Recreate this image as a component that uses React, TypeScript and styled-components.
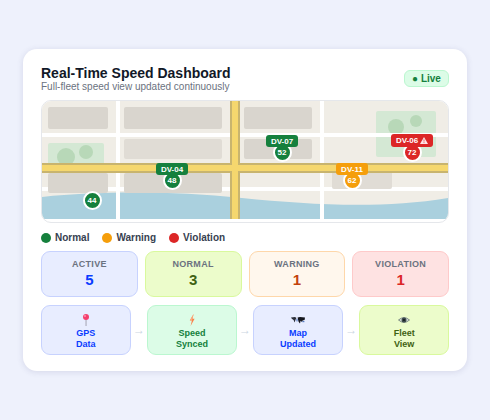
import React from 'react';
import styled, { createGlobalStyle } from 'styled-components';

const GlobalStyle = createGlobalStyle`
  html, body {
    margin: 0;
    padding: 0;
    height: 100%;
    background: #eef1fc;
    font-family: "Liberation Sans", Arial, sans-serif;
  }
  #root { height: 100%; }
`;

const Page = styled.div`
  height: 420px;
  display: flex;
  align-items: center;
  justify-content: center;
`;

const Card = styled.div`
  width: 444px;
  box-sizing: border-box;
  padding: 16px 18px 16px;
  background: #fff;
  border-radius: 14px;
  box-shadow: 0 1px 6px rgba(60, 60, 110, 0.14);
`;

const Header = styled.div`
  display: flex;
  justify-content: space-between;
  align-items: flex-start;
  margin-bottom: 7px;
`;

const Title = styled.h1`
  margin: 0;
  font-size: 14px;
  line-height: 16px;
  font-weight: 700;
  color: #111827;
`;

const Subtitle = styled.p`
  margin: 0;
  font-size: 10px;
  line-height: 12px;
  color: #6b7280;
`;

const LiveBadge = styled.span`
  margin-top: 5px;
  box-sizing: border-box;
  height: 17px;
  width: 45px;
  display: flex;
  align-items: center;
  justify-content: center;
  background: #dcfce7;
  border: 1px solid #bbf7d0;
  border-radius: 6px;
  font-size: 10px;
  font-weight: 700;
  color: #15803d;
`;

const MapFrame = styled.div`
  position: relative;
  height: 123px;
  box-sizing: border-box;
  border: 1px solid #e5e7eb;
  border-radius: 10px;
  overflow: hidden;
  background: #fff;
`;

const MapArt = styled.svg`
  display: block;
  width: 406px;
  height: 118px;
`;

const tones = {
  normal: '#15803d',
  warning: '#f59e0b',
  violation: '#dc2626',
};

type Tone = keyof typeof tones;

const Marker = styled.div<{ $x: number; $y: number }>`
  position: absolute;
  left: ${p => p.$x}px;
  top: ${p => p.$y}px;
  width: 0;
  display: flex;
  flex-direction: column;
  align-items: center;
`;

const MarkerTag = styled.span<{ $tone: Tone; $alert: boolean }>`
  position: relative;
  z-index: 1;
  flex: none;
  height: ${p => (p.$alert ? '13px' : '12px')};
  padding: 0 5px;
  display: flex;
  align-items: center;
  gap: 2px;
  background: ${p => tones[p.$tone]};
  border-radius: 3px;
  color: #fff;
  font-size: 8px;
  font-weight: 700;
  white-space: nowrap;
`;

const MarkerDot = styled.span<{ $tone: Tone; $tagged: boolean }>`
  flex: none;
  width: 19px;
  height: 19px;
  box-sizing: border-box;
  margin-top: ${p => (p.$tagged ? '-4px' : '0')};
  display: flex;
  align-items: center;
  justify-content: center;
  background: ${p => tones[p.$tone]};
  border: 2px solid #fff;
  border-radius: 50%;
  color: #fff;
  font-size: 8px;
  font-weight: 700;
`;

const Legend = styled.div`
  display: flex;
  gap: 13px;
  margin: 9px 0 8px;
  height: 11px;
`;

const LegendItem = styled.span`
  display: flex;
  align-items: center;
  gap: 4px;
  font-size: 10px;
  font-weight: 700;
  color: #374151;
`;

const LegendDot = styled.i<{ $tone: Tone }>`
  width: 10px;
  height: 10px;
  border-radius: 50%;
  background: ${p => tones[p.$tone]};
`;

const Stats = styled.div`
  display: grid;
  grid-template-columns: repeat(4, 1fr);
  gap: 7px;
  margin-bottom: 8px;
`;

const palettes = {
  blue: { bg: '#e8edff', border: '#c7d2fe', text: '#0a3cff' },
  green: { bg: '#dcfce7', border: '#bbf7d0', text: '#15803d' },
  lime: { bg: '#ecfccb', border: '#d9f99d', text: '#3f6212' },
  orange: { bg: '#fff7ed', border: '#fed7aa', text: '#c2410c' },
  red: { bg: '#fee2e2', border: '#fecaca', text: '#dc2626' },
};

type Palette = keyof typeof palettes;

const StatBox = styled.div<{ $palette: Palette }>`
  height: 46px;
  box-sizing: border-box;
  padding-top: 5px;
  text-align: center;
  background: ${p => palettes[p.$palette].bg};
  border: 1px solid ${p => palettes[p.$palette].border};
  border-radius: 9px;
`;

const StatLabel = styled.div`
  font-size: 9px;
  line-height: 14px;
  font-weight: 700;
  letter-spacing: 0.3px;
  color: #6b7280;
`;

const StatValue = styled.div<{ $palette: Palette }>`
  font-size: 15px;
  line-height: 18px;
  font-weight: 700;
  color: ${p => palettes[p.$palette].text};
`;

const Flow = styled.div`
  display: flex;
  align-items: center;
`;

const FlowStep = styled.div<{ $palette: Palette }>`
  flex: 1 1 0;
  height: 50px;
  box-sizing: border-box;
  padding-top: 3px;
  display: flex;
  flex-direction: column;
  align-items: center;
  justify-content: center;
  text-align: center;
  background: ${p => palettes[p.$palette].bg};
  border: 1px solid ${p => palettes[p.$palette].border};
  border-radius: 9px;
  color: ${p => palettes[p.$palette].text};
  font-size: 9px;
  line-height: 11px;
  font-weight: 700;
`;

const FlowIcon = styled.svg`
  display: block;
  flex: none;
  width: 16px;
  height: 12px;
  margin-bottom: 2px;
`;

const FlowArrow = styled.span`
  flex: none;
  width: 16.5px;
  text-align: center;
  font-size: 12px;
  line-height: 12px;
  color: #cbd5e1;
`;

const PinIcon = () => (
  <FlowIcon viewBox="0 0 16 12">
    <rect x="7.4" y="4" width="1.3" height="8" fill="#b4b4c4" />
    <circle cx="8" cy="3" r="3" fill="#f43f6e" />
    <circle cx="7" cy="2" r="0.9" fill="#ff9ab4" />
  </FlowIcon>
);

const BoltIcon = () => (
  <FlowIcon viewBox="0 0 16 12">
    <path d="M9.6 0 L5.8 6.6 H7.9 L6.6 12 L10.6 4.8 H8.5 Z" fill="#f9814a" />
    <path d="M9.6 0 L5.8 6.6 H7.9 L8.5 4.8 Z" fill="#fbab7e" />
  </FlowIcon>
);

const MapIcon = () => (
  <FlowIcon viewBox="0 0 16 12">
    <path d="M1 3.5 L5 3 L6.5 4 L5.6 5.6 L4.6 8.6 L3.6 6 L1.8 4.8 Z" fill="#2b2f3a" />
    <path d="M7.6 3.6 L10 3 L15 3.6 L14.6 6 L12.6 6.4 L12 8 L10.6 6.8 L10 9.6 L8.6 7.8 L8 5.6 Z" fill="#14161e" />
    <rect x="6.4" y="5" width="1.2" height="2.4" fill="#5a7fc4" />
    <rect x="12.4" y="7" width="2" height="1.2" fill="#5a7fc4" />
  </FlowIcon>
);

const EyeIcon = () => (
  <FlowIcon viewBox="0 0 16 12">
    <path d="M2.5 6 Q8 1.2 13.5 6 Q8 10.8 2.5 6 Z" fill="#dfe6e0" stroke="#6f7f78" strokeWidth="0.9" />
    <circle cx="8" cy="6" r="2.5" fill="#3d4a4d" />
    <circle cx="8" cy="6" r="1.1" fill="#12181a" />
  </FlowIcon>
);

const AlertIcon = () => (
  <svg width="8" height="7" viewBox="0 0 8 7">
    <path d="M4 0 L8 7 H0 Z" fill="#fde3e6" />
    <rect x="3.5" y="2.4" width="1" height="2.2" fill="#e66" />
    <rect x="3.5" y="5.1" width="1" height="1" fill="#e66" />
  </svg>
);

const markers: { id?: string; speed: number; tone: Tone; x: number; y: number; alert?: boolean }[] = [
  { speed: 44, tone: 'normal', x: 50, y: 90 },
  { id: 'DV-04', speed: 48, tone: 'normal', x: 130, y: 62 },
  { id: 'DV-07', speed: 52, tone: 'normal', x: 240, y: 34 },
  { id: 'DV-11', speed: 62, tone: 'warning', x: 310, y: 62 },
  { id: 'DV-06', speed: 72, tone: 'violation', x: 370, y: 33, alert: true },
];

const stats: { label: string; value: number; palette: Palette }[] = [
  { label: 'ACTIVE', value: 5, palette: 'blue' },
  { label: 'NORMAL', value: 3, palette: 'lime' },
  { label: 'WARNING', value: 1, palette: 'orange' },
  { label: 'VIOLATION', value: 1, palette: 'red' },
];

const steps: { icon: React.ReactNode; lines: string[]; palette: Palette }[] = [
  { icon: <PinIcon />, lines: ['GPS', 'Data'], palette: 'blue' },
  { icon: <BoltIcon />, lines: ['Speed', 'Synced'], palette: 'green' },
  { icon: <MapIcon />, lines: ['Map', 'Updated'], palette: 'blue' },
  { icon: <EyeIcon />, lines: ['Fleet', 'View'], palette: 'lime' },
];

// map drawing, coordinates are relative to the inside of the frame
const CityMap = () => (
  <MapArt viewBox="0 0 406 118">
    <rect width="406" height="118" fill="#f0ede6" />
    <rect x="334" y="10" width="60" height="46" rx="2" fill="#d4e8d4" />
    <circle cx="354" cy="26" r="8" fill="#b8d8b8" />
    <circle cx="374" cy="20" r="6" fill="#b8d8b8" />
    <rect x="6" y="42" width="56" height="30" rx="2" fill="#d4e8d4" />
    <circle cx="24" cy="56" r="9" fill="#b8d8b8" />
    <circle cx="44" cy="51" r="7" fill="#b8d8b8" />
    <rect y="32" width="406" height="4" fill="#fff" />
    <rect y="86" width="406" height="4" fill="#fff" />
    <path d="M0 96 C60 90 130 90 200 97 S340 108 406 97 V118 H0 Z" fill="#aad0de" />
    <rect x="6" y="6" width="60" height="22" rx="2" fill="#d9d5ce" />
    <rect x="82" y="6" width="98" height="22" rx="2" fill="#d9d5ce" />
    <rect x="202" y="6" width="68" height="22" rx="2" fill="#d9d5ce" />
    <rect x="82" y="38" width="98" height="20" rx="2" fill="#e0dcd5" />
    <rect x="202" y="38" width="68" height="20" rx="2" fill="#d9d5ce" />
    <rect x="6" y="72" width="60" height="20" rx="2" fill="#d9d5ce" />
    <rect x="82" y="72" width="98" height="20" rx="2" fill="#d9d5ce" />
    <rect x="290" y="68" width="60" height="20" rx="2" fill="#e0dcd5" />
    <rect x="74" width="4" height="118" fill="#fff" />
    <rect x="278" width="4" height="118" fill="#fff" />
    <rect y="62" width="406" height="10" fill="#c8b46e" />
    <rect x="188" width="10" height="118" fill="#c8b46e" />
    <rect y="64" width="406" height="6" fill="#f5d76e" />
    <rect x="190" width="6" height="118" fill="#f5d76e" />
  </MapArt>
);

const App: React.FC = () => (
  <Page>
    <GlobalStyle />
    <Card>
      <Header>
        <div>
          <Title>Real-Time Speed Dashboard</Title>
          <Subtitle>Full-fleet speed view updated continuously</Subtitle>
        </div>
        <LiveBadge>● Live</LiveBadge>
      </Header>

      <MapFrame>
        <CityMap />
        {markers.map(m => (
          <Marker key={m.speed} $x={m.x} $y={m.y}>
            {m.id && (
              <MarkerTag $tone={m.tone} $alert={!!m.alert}>
                {m.id}
                {m.alert && <AlertIcon />}
              </MarkerTag>
            )}
            <MarkerDot $tone={m.tone} $tagged={!!m.id}>
              {m.speed}
            </MarkerDot>
          </Marker>
        ))}
      </MapFrame>

      <Legend>
        <LegendItem><LegendDot $tone="normal" />Normal</LegendItem>
        <LegendItem><LegendDot $tone="warning" />Warning</LegendItem>
        <LegendItem><LegendDot $tone="violation" />Violation</LegendItem>
      </Legend>

      <Stats>
        {stats.map(s => (
          <StatBox key={s.label} $palette={s.palette}>
            <StatLabel>{s.label}</StatLabel>
            <StatValue $palette={s.palette}>{s.value}</StatValue>
          </StatBox>
        ))}
      </Stats>

      <Flow>
        {steps.map((step, i) => (
          <React.Fragment key={step.lines[0]}>
            {i > 0 && <FlowArrow>→</FlowArrow>}
            <FlowStep $palette={step.palette}>
              {step.icon}
              {step.lines.map(line => (
                <span key={line}>{line}</span>
              ))}
            </FlowStep>
          </React.Fragment>
        ))}
      </Flow>
    </Card>
  </Page>
);

export default App;
